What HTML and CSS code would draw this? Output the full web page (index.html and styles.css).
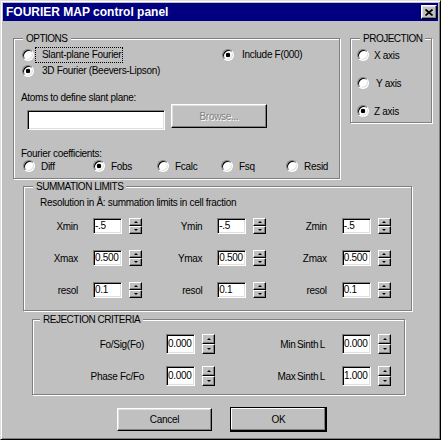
FILE: index.html
```html
<!DOCTYPE html>
<html>
<head>
<meta charset="utf-8">
<title>FOURIER MAP control panel</title>
<link rel="stylesheet" href="styles.css">
</head>
<body>
<div class="window">
  <div class="titlebar">
    <span class="title">FOURIER MAP control panel</span>
    <span class="close"><svg width="8" height="7" viewBox="0 0 8 7"><path d="M0.5 0.5L7.5 6.5M7.5 0.5L0.5 6.5" stroke="#000" stroke-width="1.7"/></svg></span>
  </div>
  <div class="content">
    <div class="top-row">
      <fieldset class="group options">
        <legend>OPTIONS</legend>
        <div class="options-body">
          <div class="opt-row">
            <div class="radio first"><span class="rb"></span><span class="rlabel focus">Slant-plane Fourier</span></div>
            <div class="radio"><span class="rb on"></span><span class="rlabel">Include F(000)</span></div>
          </div>
          <div class="opt-row">
            <div class="radio"><span class="rb on"></span><span class="rlabel">3D Fourier (Beevers-Lipson)</span></div>
          </div>
          <div class="caption atoms-caption">Atoms to define slant plane:</div>
          <div class="atoms-row">
            <div class="edit wide"></div>
            <div class="btn browse disabled">Browse...</div>
          </div>
          <div class="caption coef-caption">Fourier coefficients:</div>
          <div class="coef-row">
            <div class="coef c1"><span class="rb"></span><span>Diff</span></div>
            <div class="coef c2"><span class="rb on"></span><span>Fobs</span></div>
            <div class="coef c3"><span class="rb"></span><span>Fcalc</span></div>
            <div class="coef c4"><span class="rb"></span><span>Fsq</span></div>
            <div class="coef"><span class="rb"></span><span>Resid</span></div>
          </div>
        </div>
      </fieldset>
      <fieldset class="group projection">
        <legend>PROJECTION</legend>
        <div class="proj-body">
          <div class="proj-row"><span class="rb"></span><span class="plabel">X axis</span></div>
          <div class="proj-row"><span class="rb"></span><span class="plabel y">Y axis</span></div>
          <div class="proj-row"><span class="rb on"></span><span class="plabel">Z axis</span></div>
        </div>
      </fieldset>
    </div>

    <fieldset class="group summation">
      <legend>SUMMATION LIMITS</legend>
      <div class="sum-body">
        <div class="caption sum-caption">Resolution in Å: summation limits in cell fraction</div>
        <div class="sum-grid">
          <div class="sum-row">
            <div class="cell"><span class="lbl">Xmin</span><div class="edit">-.5</div><div class="spin"><i class="up"></i><i class="down"></i></div></div>
            <div class="cell"><span class="lbl">Ymin</span><div class="edit">-.5</div><div class="spin"><i class="up"></i><i class="down"></i></div></div>
            <div class="cell"><span class="lbl">Zmin</span><div class="edit">-.5</div><div class="spin"><i class="up"></i><i class="down"></i></div></div>
          </div>
          <div class="sum-row">
            <div class="cell"><span class="lbl">Xmax</span><div class="edit">0.500</div><div class="spin"><i class="up"></i><i class="down"></i></div></div>
            <div class="cell"><span class="lbl">Ymax</span><div class="edit">0.500</div><div class="spin"><i class="up"></i><i class="down"></i></div></div>
            <div class="cell"><span class="lbl">Zmax</span><div class="edit">0.500</div><div class="spin"><i class="up"></i><i class="down"></i></div></div>
          </div>
          <div class="sum-row">
            <div class="cell"><span class="lbl">resol</span><div class="edit">0.1</div><div class="spin"><i class="up"></i><i class="down"></i></div></div>
            <div class="cell"><span class="lbl">resol</span><div class="edit">0.1</div><div class="spin"><i class="up"></i><i class="down"></i></div></div>
            <div class="cell"><span class="lbl">resol</span><div class="edit">0.1</div><div class="spin"><i class="up"></i><i class="down"></i></div></div>
          </div>
        </div>
      </div>
    </fieldset>

    <fieldset class="group rejection">
      <legend>REJECTION CRITERIA</legend>
      <div class="rej-body">
        <div class="rej-row">
          <span class="lbl1">Fo/Sig(Fo)</span><div class="edit tall">0.000</div><div class="spin tall"><i class="up"></i><i class="down"></i></div>
          <span class="lbl2">Min Sinth L</span><div class="edit tall">0.000</div><div class="spin tall"><i class="up"></i><i class="down"></i></div>
        </div>
        <div class="rej-row">
          <span class="lbl1">Phase Fc/Fo</span><div class="edit tall">0.000</div><div class="spin tall"><i class="up"></i><i class="down"></i></div>
          <span class="lbl2">Max Sinth L</span><div class="edit tall">1.000</div><div class="spin tall"><i class="up"></i><i class="down"></i></div>
        </div>
      </div>
    </fieldset>

    <div class="buttons">
      <div class="btn cancel">Cancel</div>
      <div class="btn default">OK</div>
    </div>
  </div>
</div>
</body>
</html>
```

FILE: styles.css
```css
* { box-sizing: border-box; }
html, body { margin: 0; padding: 0; }
body {
  background: #ffffff;
  width: 443px;
  height: 442px;
  overflow: hidden;
  font-family: "Liberation Sans", Arial, sans-serif;
  font-size: 10px;
  letter-spacing: -0.3px;
  color: #000;
}
.window {
  width: 441px;
  height: 440px;
  background: #c0c0c0;
  border: 1px solid;
  border-color: #dfdfdf #000 #000 #dfdfdf;
  box-shadow: inset 1px 1px 0 #fff, inset -1px -1px 0 #808080;
  padding: 2px;
  display: flex;
  flex-direction: column;
}
.titlebar {
  height: 18px;
  flex: none;
  background: #000080;
  color: #fff;
  display: flex;
  align-items: center;
  justify-content: space-between;
  padding: 0 1px 0 3px;
}
.title {
  font-family: "Liberation Sans", Arial, sans-serif;
  font-weight: bold;
  font-size: 12px;
  letter-spacing: 0;
  line-height: 14px;
}
.close {
  width: 16px;
  height: 14px;
  background: #c0c0c0;
  border: 1px solid;
  border-color: #fff #000 #000 #fff;
  box-shadow: inset -1px -1px 0 #808080, inset 1px 1px 0 #dfdfdf;
  display: flex;
  align-items: center;
  justify-content: center;
}
.content {
  flex: 1;
  display: flex;
  flex-direction: column;
  align-items: flex-start;
  padding: 11px 0 0 10px;
}
.top-row { display: flex; align-items: flex-start; }

/* group boxes */
.group {
  margin: 0;
  padding: 0;
  min-width: 0;
  border: 1px solid #808080;
  box-shadow: inset 1px 1px 0 #fff, 1px 1px 0 #fff;
}
.group legend {
  padding: 0 3px;
  margin-left: 9px;
  line-height: 13px;
  letter-spacing: -0.5px;
  background: #c0c0c0;
}
.options { width: 327px; }
.projection { width: 82px; margin-left: 10px; }
.summation { width: 389px; margin: 1px 0 0 10px; }
.rejection { width: 373px; margin: 2px 0 0 19px; }
.rejection legend { margin-left: 7px; }

/* radios */
.rb {
  flex: none;
  width: 12px;
  height: 12px;
  border-radius: 50%;
  background: #fff;
  border: 1px solid;
  border-color: #808080 #fff #fff #808080;
  box-shadow: inset 1px 1px 0 #000, inset -1px -1px 0 #dfdfdf;
}
.rb.on { background: radial-gradient(circle, #000 0, #000 2px, #fff 2.6px); }

.options-body { padding: 2px 0 6px 8px; }
.opt-row { display: flex; height: 16px; align-items: center; }
.radio { display: flex; align-items: center; }
.radio.first { width: 200px; }
.rlabel {
  margin-left: 1px;
  padding: 0 1px 0 6px;
  line-height: 14px;
  border: 1px solid transparent;
}
.rlabel.focus { border: 1px dotted #000; }
.caption { line-height: 12px; }
.atoms-caption { margin: 13px 0 0 -1px; }
.atoms-row { display: flex; align-items: flex-start; height: 26px; }
.edit {
  width: 29px;
  height: 16px;
  flex: none;
  background: #fff;
  border: 1px solid;
  border-color: #808080 #fff #fff #808080;
  box-shadow: inset 1px 1px 0 #000, inset -1px -1px 0 #dfdfdf;
  padding-left: 1px;
  line-height: 14px;
  white-space: nowrap;
}
.edit.wide { width: 138px; height: 20px; margin: 6px 0 0 5px; }
.edit.tall { height: 20px; line-height: 18px; }
.btn {
  width: 95px;
  height: 23px;
  background: #c0c0c0;
  border: 1px solid;
  border-color: #fff #000 #000 #fff;
  box-shadow: inset -1px -1px 0 #808080, inset 1px 1px 0 #dfdfdf;
  display: flex;
  align-items: center;
  justify-content: center;
}
.browse { width: 96px; height: 24px; margin-left: 6px; }
.disabled { color: #808080; text-shadow: 1px 1px 0 #fff; }
.coef-caption { margin: 18px 0 0 -1px; }
.coef-row { display: flex; height: 12px; align-items: center; margin-left: 1px; }
.coef { display: flex; align-items: center; gap: 6px; }
.c1 { width: 70px; }
.c2, .c3 { width: 64px; }
.c4 { width: 65px; }

.proj-body { padding: 2px 0 3px 6px; display: flex; flex-direction: column; gap: 12px; }
.proj-row { display: flex; align-items: center; height: 16px; }
.plabel { margin-left: 5px; }
.plabel.y { margin-left: 7px; }

/* summation */
.sum-body { padding: 4px 0 12px 14px; }
.sum-caption { margin-left: 2px; }
.sum-grid { margin-top: 9px; display: flex; flex-direction: column; gap: 16px; }
.sum-row { display: flex; height: 16px; align-items: center; }
.cell { display: flex; align-items: center; width: 127px; }
.cell .lbl { width: 40px; text-align: right; margin-right: 15px; }

.spin {
  flex: none;
  width: 13px;
  height: 16px;
  margin-left: 7px;
  display: flex;
  flex-direction: column;
}
.spin.tall { height: 20px; }
.spin i {
  flex: 1;
  background: #c0c0c0;
  border: 1px solid;
  border-color: #fff #000 #000 #fff;
  box-shadow: inset -1px -1px 0 #808080;
  display: flex;
  align-items: center;
  justify-content: center;
}
.spin i::before {
  content: "";
  width: 0;
  height: 0;
  border-left: 2px solid transparent;
  border-right: 2px solid transparent;
}
.spin i.up::before { border-bottom: 2px solid #000; }
.spin i.down::before { border-top: 2px solid #000; }

/* rejection */
.rej-body { padding: 8px 0 8px 11px; display: flex; flex-direction: column; gap: 12px; }
.rej-row { display: flex; align-items: center; height: 20px; }
.lbl1 { width: 100px; text-align: right; margin-right: 22px; }
.lbl2 { width: 80px; text-align: right; margin: 0 17px 0 30px; word-spacing: -1px; }

/* buttons */
.buttons { display: flex; align-items: center; margin: 12px 0 0 104px; gap: 18px; }
.btn.default {
  width: 97px;
  height: 25px;
  border: 1px solid #000;
  box-shadow: inset -1px -1px 0 #000, inset -2px -2px 0 #808080, inset 1px 1px 0 #fff;
}
```
